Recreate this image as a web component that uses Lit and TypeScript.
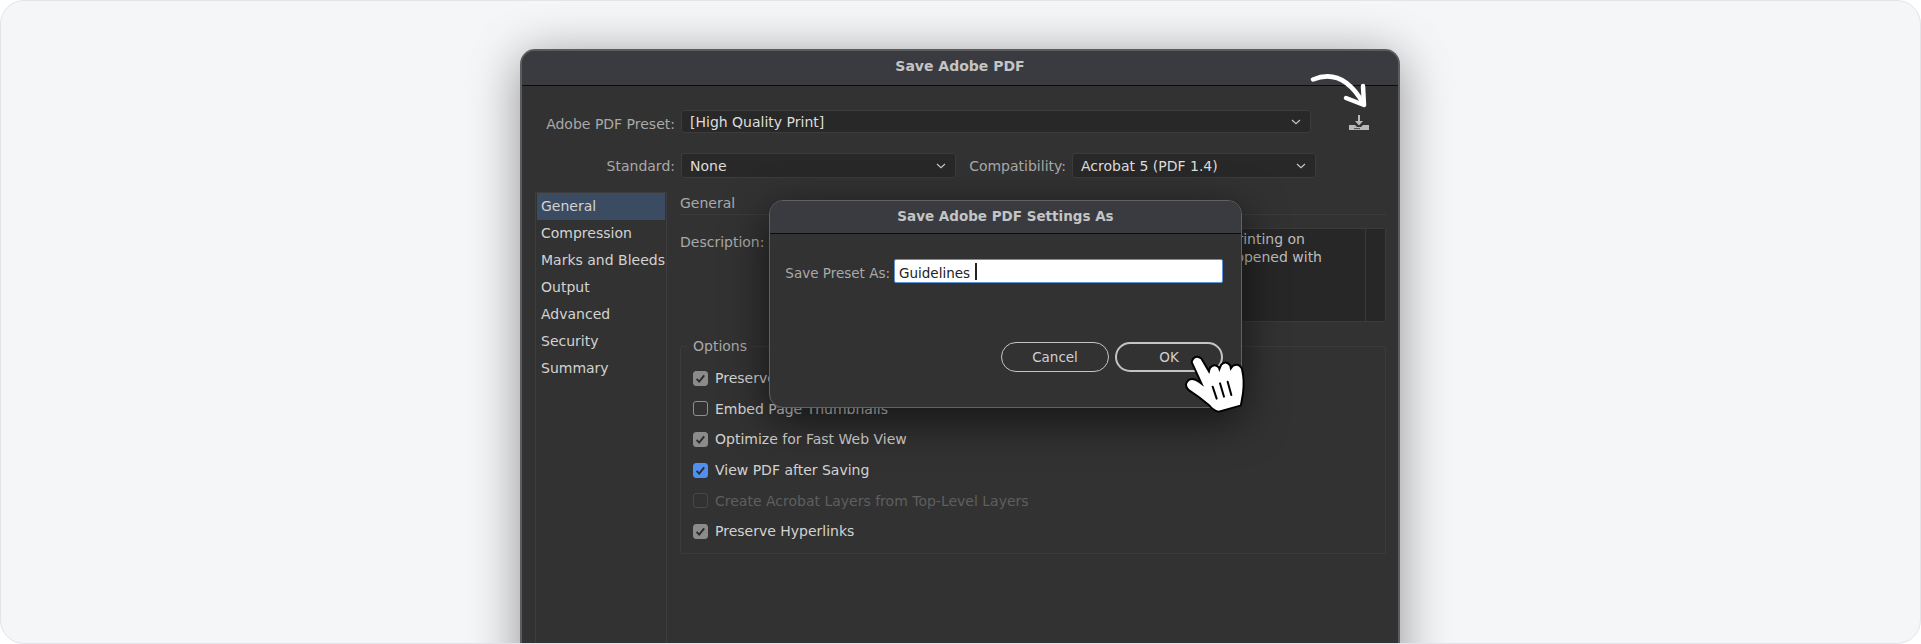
import { css, html, LitElement, svg } from "lit";
import { customElement } from "lit/decorators.js";

const chevron = html`<svg class="chev" width="10" height="6" viewBox="0 0 10 6"><path d="M1 1l4 3.6L9 1" fill="none" stroke="#c4c4c4" stroke-width="1.2"/></svg>`;

const check = svg`<path d="M3.6 7.8l2.6 2.8 5-6.2" fill="none" stroke="#2b2b2b" stroke-width="1.9"/>`;

const sections = ["General", "Compression", "Marks and Bleeds", "Output", "Advanced", "Security", "Summary"];

const options = [
  { label: "Preserve Illustrator Editing Capabilities", state: "on" },
  { label: "Embed Page Thumbnails", state: "off" },
  { label: "Optimize for Fast Web View", state: "on" },
  { label: "View PDF after Saving", state: "blue" },
  { label: "Create Acrobat Layers from Top-Level Layers", state: "disabled" },
  { label: "Preserve Hyperlinks", state: "on" },
];

@customElement("app-root")
export class AppRoot extends LitElement {
  static styles = css`
    :host {
      display: block;
      font-family: "DejaVu Sans", "Liberation Sans", sans-serif;
      font-size: 14px;
    }

    .card {
      position: relative;
      box-sizing: border-box;
      height: 644px;
      background: #f5f6f8;
      border: 1px solid #e2e4e7;
      border-radius: 24px;
      overflow: hidden;
    }

    .window {
      box-sizing: border-box;
      width: 880px;
      height: 640px;
      margin: 48px 0 0 519px;
      display: flex;
      flex-direction: column;
      background: #323232;
      border: 2px solid #5c5c5e;
      border-bottom: none;
      border-radius: 15px 15px 0 0;
      box-shadow: 0 8px 50px rgba(0, 0, 0, 0.42);
    }

    .titlebar {
      flex: none;
      box-sizing: border-box;
      background: #3a3b40;
      color: #c4c4c4;
      font-weight: 700;
      text-align: center;
      border-bottom: 1px solid #0c0c0c;
      border-radius: 13px 13px 0 0;
    }

    .window > .titlebar {
      height: 35px;
      line-height: 30px;
    }

    .rows {
      flex: none;
      display: flex;
      flex-direction: column;
      gap: 20px;
      padding: 24px 0 0;
    }

    .row {
      display: flex;
      align-items: center;
    }

    .label {
      color: #a9a9a9;
      white-space: nowrap;
    }

    .row > .label:first-child {
      width: 153px;
      text-align: right;
      margin-right: 6px;
    }

    .clip {
      height: 23px;
      line-height: 29px;
      overflow: hidden;
    }

    .select {
      box-sizing: border-box;
      display: flex;
      align-items: center;
      justify-content: space-between;
      padding: 1px 9px 0 8px;
      background: #282828;
      border: 1px solid #3c3c3c;
      border-radius: 3px;
      color: #dddddd;
    }

    .select.preset {
      width: 630px;
      height: 23px;
    }

    .select.standard {
      width: 275px;
      height: 25px;
    }

    .select.compat {
      width: 244px;
      height: 25px;
    }

    .compat-label {
      margin: 0 6px 0 auto;
    }

    .row.second {
      padding-right: 82px;
    }

    .save-icon {
      margin: 3px 0 0 38px;
    }

    .main {
      flex: 1;
      display: flex;
      gap: 13px;
      padding: 14px 12px 0 13px;
      min-height: 0;
    }

    .list {
      box-sizing: border-box;
      flex: none;
      width: 132px;
      padding: 0 1px;
      border: solid #3d3d3d;
      border-width: 1px 1px 0 1px;
    }

    .item {
      height: 27px;
      line-height: 26px;
      padding-left: 4px;
      color: #d2d2d2;
      white-space: nowrap;
      overflow: hidden;
    }

    .item.active {
      background: #3b4b61;
    }

    .panel {
      flex: 1;
      min-width: 0;
    }

    .panel-head {
      height: 22px;
      line-height: 22px;
      color: #a9a9a9;
      border-bottom: 1px solid #3b3b3b;
    }

    .desc-row {
      display: flex;
      gap: 6px;
      margin: 13px 0 24px;
    }

    .desc-row .label {
      line-height: 29px;
    }

    .desc {
      box-sizing: border-box;
      flex: 1;
      height: 94px;
      display: flex;
      background: #272727;
      border: 1px solid #3b3b3b;
      border-radius: 2px;
      color: #bdbdbd;
    }

    .desc-text {
      flex: 1;
      min-width: 0;
      overflow: hidden;
      padding-top: 1px;
      text-align: right;
      white-space: nowrap;
      line-height: 18px;
    }

    .desc-line {
      padding-right: 60px;
    }

    .desc-line.second {
      padding-right: 43px;
    }

    .scrollbar {
      flex: none;
      width: 19px;
      border-left: 1px solid #3b3b3b;
    }

    .options {
      box-sizing: border-box;
      height: 216px;
      margin: -8px 0 0;
      padding: 9px 0 0 12px;
      border: 1px solid #3b3b3b;
      border-radius: 2px;
      display: grid;
      grid-auto-rows: 30.6px;
      align-items: center;
      align-content: start;
      min-inline-size: 0;
    }

    legend {
      margin-left: -6px;
      padding: 0 6px;
      color: #a9a9a9;
      line-height: 16px;
    }

    .opt {
      display: flex;
      align-items: center;
      gap: 7px;
      color: #d2d2d2;
    }

    .box {
      flex: none;
      display: block;
    }

    .opt.disabled {
      color: #5f5f5f;
    }

    /* sits over the main dialog */
    .modal {
      position: absolute;
      left: 768px;
      top: 199px;
      box-sizing: border-box;
      width: 473px;
      height: 208px;
      font-size: 13.5px;
      background: #323232;
      border: 1px solid #616163;
      border-radius: 14px;
      box-shadow: 0 12px 44px rgba(0, 0, 0, 0.6);
      display: flex;
      flex-direction: column;
    }

    .modal > .titlebar {
      height: 33px;
      line-height: 30px;
    }

    .modal-row {
      display: flex;
      align-items: center;
      gap: 4px;
      padding: 25px 18px 0 0;
    }

    .modal-row .label {
      width: 120px;
      padding-top: 3px;
      text-align: right;
    }

    .input {
      box-sizing: border-box;
      flex: 1;
      height: 24px;
      padding: 3px 0 0 4px;
      display: flex;
      align-items: center;
      background: #ffffff;
      border: 1.5px solid #5b92d8;
      border-radius: 2px;
      color: #222222;
    }

    .caret {
      width: 2px;
      height: 17px;
      margin: -2px 0 0 5px;
      background: #222222;
    }

    .buttons {
      display: flex;
      justify-content: flex-end;
      gap: 6px;
      padding: 59px 18px 0 0;
    }

    .btn {
      box-sizing: border-box;
      width: 108px;
      height: 30px;
      line-height: 28px;
      text-align: center;
      color: #d0d0d0;
      border: 1px solid #c4c4c4;
      border-radius: 15px;
    }

    .btn.default {
      line-height: 26px;
      border-width: 2px;
    }

    .arrow,
    .hand {
      position: absolute;
      display: block;
    }

    .arrow {
      left: 1304px;
      top: 68px;
    }

    .hand {
      left: 1159px;
      top: 329px;
    }
  `;

  private renderBox(state: string) {
    const fill = state === "on" ? "#8b8b8b" : state === "blue" ? "#4f8ff0" : "none";
    const stroke = state === "off" ? "#8f8f8f" : state === "disabled" ? "#484848" : fill;
    return html`<svg class="box" width="15" height="15" viewBox="0 0 15 15">
      <rect x=".5" y=".5" width="14" height="14" rx="2.5" fill=${fill} stroke=${stroke} />
      ${state === "on" || state === "blue" ? check : ""}
    </svg>`;
  }

  render() {
    return html`
      <div class="card">
        <div class="window">
          <div class="titlebar">Save Adobe PDF</div>
          <div class="rows">
            <div class="row">
              <span class="label clip">Adobe PDF Preset:</span>
              <div class="select preset">[High Quality Print]${chevron}</div>
              <svg class="save-icon" width="20" height="16" viewBox="0 0 20 16">
                <path d="M9 0h2v6h3l-4 4.5L6 6h3z" fill="#b9b9b9" />
                <path d="M0 10h6l2 2h4l2-2h6v5H0z" fill="#b9b9b9" />
                <path d="M5 13.6h6" stroke="#4a4a4a" stroke-width="1" />
              </svg>
            </div>
            <div class="row second">
              <span class="label">Standard:</span>
              <div class="select standard">None${chevron}</div>
              <span class="label compat-label">Compatibility:</span>
              <div class="select compat">Acrobat 5 (PDF 1.4)${chevron}</div>
            </div>
          </div>
          <div class="main">
            <div class="list">
              ${sections.map(
                (s, i) => html`<div class="item ${i === 0 ? "active" : ""}">${s}</div>`,
              )}
            </div>
            <div class="panel">
              <div class="panel-head">General</div>
              <div class="desc-row">
                <span class="label">Description:</span>
                <div class="desc">
                  <div class="desc-text">
                    <div class="desc-line">Use these settings to create Adobe PDF documents for quality printing on</div>
                    <div class="desc-line second">desktop printers and proofers. Created PDF documents can be opened with</div>
                  </div>
                  <div class="scrollbar"></div>
                </div>
              </div>
              <fieldset class="options">
                <legend>Options</legend>
                ${options.map(
                  (o) => html`<div class="opt ${o.state === "disabled" ? "disabled" : ""}">
                    ${this.renderBox(o.state)}<span>${o.label}</span>
                  </div>`,
                )}
              </fieldset>
            </div>
          </div>
        </div>

        <div class="modal">
          <div class="titlebar">Save Adobe PDF Settings As</div>
          <div class="modal-row">
            <span class="label">Save Preset As:</span>
            <div class="input">Guidelines<span class="caret"></span></div>
          </div>
          <div class="buttons">
            <div class="btn">Cancel</div>
            <div class="btn default">OK</div>
          </div>
        </div>

        <svg class="arrow" width="70" height="44" viewBox="0 0 70 44">
          <path d="M8 10.5C26 3 43 8 58 34" fill="none" stroke="#fff" stroke-width="4.5" stroke-linecap="round" />
          <path d="M41 29l18 7-1-19" fill="none" stroke="#fff" stroke-width="4.5" stroke-linecap="round" stroke-linejoin="round" />
        </svg>

        <svg class="hand" width="110" height="90" viewBox="0 0 330 270">
          <path
            d="M98 96Q106 76 122 88L148 132 152 116Q162 102 174 114L178 126 186 106Q198 94 208 108L211 122 220 110Q236 102 243 118 251 150 246 190L240 224 176 242Q160 238 150 224L120 200 88 178Q74 164 88 152 100 146 116 158L132 170Z"
            fill="#fff"
            stroke="#000"
            stroke-width="12"
            stroke-linejoin="round"
            paint-order="stroke"
          />
          <path d="M158 170l12 36M180 160l12 40M203 155l11 40" fill="none" stroke="#000" stroke-width="6" stroke-linecap="round" />
        </svg>
      </div>
    `;
  }
}
